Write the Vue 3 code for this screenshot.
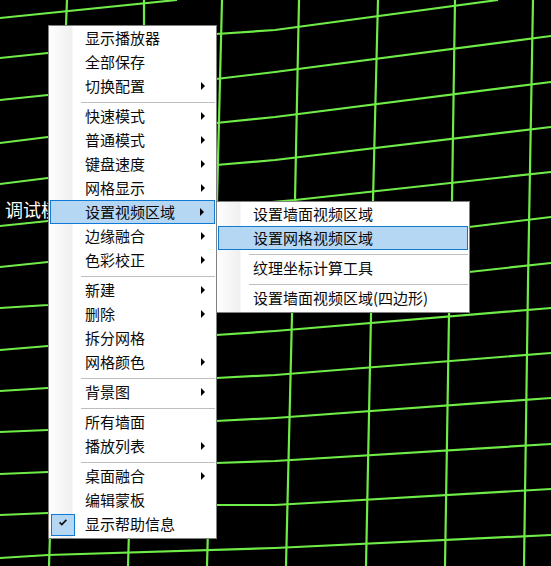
<script setup>
const hLines = [
  '0,18 177,0',
  '0,58 48,53 216,34 275,30 498,0',
  '0,100 48,95 216,79 275,72 551,36',
  '0,143 48,137 216,123 275,117 551,82',
  '0,184 48,178 216,165 275,160 551,127',
  '0,226 48,221 295,200 551,172',
  '0,267 48,262 275,243 469,227 551,217',
  '0,308 48,305 275,285 469,272 551,263',
  '0,350 48,346 216,335 275,331 551,308',
  '0,391 48,388 216,378 275,375 551,353',
  '0,432 48,430 216,421 275,418 551,398',
  '0,474 48,472 216,463 275,461 551,444',
  '0,515 48,513 216,505 275,505 551,489',
  '0,558 48,555 275,548 551,535'
]
const vLines = [
  '67,0 66,25 49,566',
  '144,0 144,25 128,566',
  '222,0 217,200 207,566',
  '299,0 295,200 292,315 286,566',
  '378,0 373,200 371,315 366,566',
  '455,0 452,200 449,315 445,566',
  '533,0 528,283 524,566'
]
const mainGroups = [
  [{ t: '显示播放器' }, { t: '全部保存' }, { t: '切换配置', sub: true }],
  [
    { t: '快速模式', sub: true },
    { t: '普通模式', sub: true },
    { t: '键盘速度', sub: true },
    { t: '网格显示', sub: true },
    { t: '设置视频区域', sub: true, active: true },
    { t: '边缘融合', sub: true },
    { t: '色彩校正', sub: true }
  ],
  [
    { t: '新建', sub: true },
    { t: '删除', sub: true },
    { t: '拆分网格' },
    { t: '网格颜色', sub: true }
  ],
  [{ t: '背景图', sub: true }],
  [{ t: '所有墙面' }, { t: '播放列表', sub: true }],
  [{ t: '桌面融合', sub: true }, { t: '编辑蒙板' }, { t: '显示帮助信息', checked: true }]
]
const subGroups = [
  [{ t: '设置墙面视频区域' }, { t: '设置网格视频区域', active: true }],
  [{ t: '纹理坐标计算工具' }],
  [{ t: '设置墙面视频区域(四边形)' }]
]
</script>

<template>
  <div class="screen">
    <svg class="grid" width="551" height="566" viewBox="0 0 551 566">
      <polyline v-for="p in hLines" :key="p" :points="p" />
      <polyline v-for="p in vLines" :key="p" :points="p" />
    </svg>
    <div class="label">调试模式</div>

    <div class="menu main">
      <template v-for="(group, g) in mainGroups" :key="g">
        <div v-if="g" class="sep"></div>
        <div v-for="item in group" :key="item.t" class="item" :class="{ active: item.active }">
          <span v-if="item.checked" class="check">
            <svg width="8" height="7" viewBox="0 0 8 7">
              <path d="M0.6 3.4 L2.8 5.6 L7.4 0.8" fill="none" stroke="#111" stroke-width="1.7" />
            </svg>
          </span>
          <span class="text">{{ item.t }}</span>
          <span v-if="item.sub" class="arrow"></span>
        </div>
      </template>
    </div>

    <div class="menu submenu">
      <template v-for="(group, g) in subGroups" :key="g">
        <div v-if="g" class="sep"></div>
        <div v-for="item in group" :key="item.t" class="item" :class="{ active: item.active }">
          <span class="text">{{ item.t }}</span>
        </div>
      </template>
    </div>
  </div>
</template>

<style scoped>
.screen {
  position: relative;
  width: 551px;
  height: 566px;
  overflow: hidden;
  background: #000;
  font-family: "Noto Sans CJK SC", "Liberation Sans", sans-serif;
}
.grid {
  position: absolute;
  left: 0;
  top: 0;
}
.grid polyline {
  fill: none;
  stroke: #6fec47;
  stroke-width: 2.2;
}
.label {
  position: absolute;
  left: 5px;
  top: 196px;
  color: #fff;
  font-size: 18px;
  line-height: 26px;
  white-space: nowrap;
}
.menu {
  position: absolute;
  box-sizing: border-box;
  border: 1px solid #808080;
  background: linear-gradient(90deg, #fefefe 0, #f0f0f0 23px, #fff 24px) no-repeat;
  padding-bottom: 2px;
}
.main {
  left: 48px;
  top: 25px;
  width: 169px;
  height: 514px;
}
.submenu {
  left: 216px;
  top: 201px;
  width: 254px;
  height: 112px;
}
.item {
  position: relative;
  box-sizing: border-box;
  display: flex;
  align-items: center;
  height: 24px;
  padding-left: 36px;
  font-size: 15px;
  line-height: 24px;
  color: #0a0a0a;
  white-space: nowrap;
}
.item.active {
  margin: 0 1px;
  background: #b5d7f3;
  border: 1px solid #0f7ad4;
  padding-left: 34px;
  line-height: 22px;
}
.sep {
  height: 1.5px;
  margin: 3.5px 1px 1px 32px;
  background: #bdbdbd;
}
.arrow {
  position: absolute;
  right: 11px;
  top: 8px;
  width: 0;
  height: 0;
  border-left: 4px solid #000;
  border-top: 4px solid transparent;
  border-bottom: 4px solid transparent;
}
.item.active .arrow {
  right: 10px;
  top: 7px;
}
.check {
  position: absolute;
  left: 2px;
  top: 2px;
  box-sizing: border-box;
  display: flex;
  justify-content: center;
  align-items: flex-start;
  width: 24px;
  height: 22px;
  padding-top: 4px;
  background: #b5d7f3;
  border: 1px solid #0f7ad4;
}
</style>
